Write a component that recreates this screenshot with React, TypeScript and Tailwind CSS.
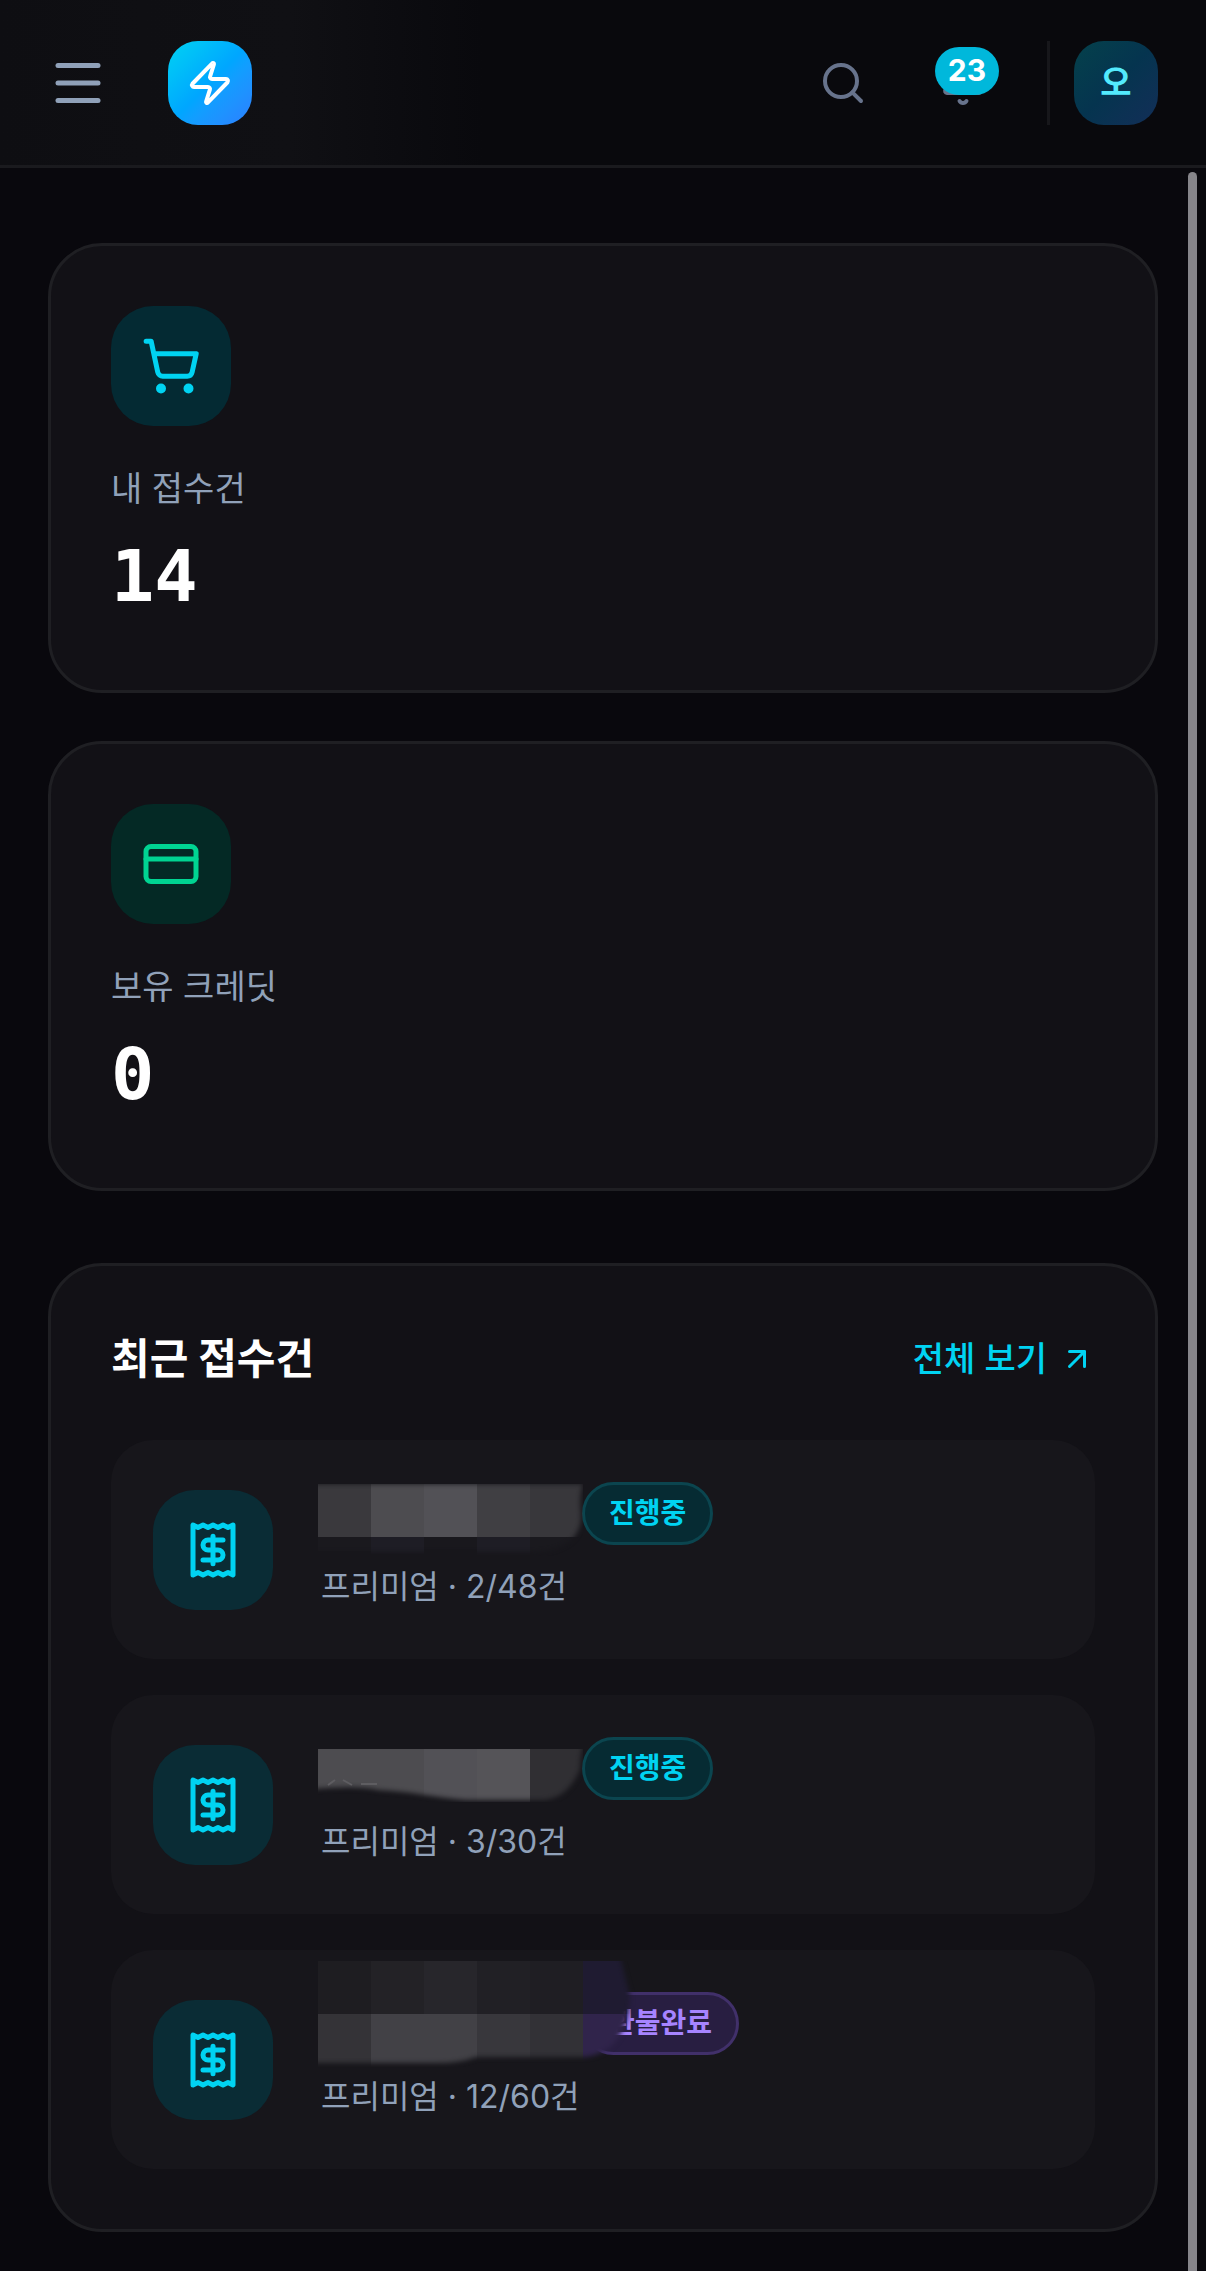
import React from "react";
import {
  ArrowUpRight,
  Bell,
  CreditCard,
  Menu,
  Receipt,
  Search,
  ShoppingCart,
  Zap,
} from "lucide-react";

type Block = { x: number; y: number; w: number; h: number; fill: string };

type Order = {
  id: string;
  detail: string;
  status: string;
  tone: "progress" | "refund";
  outline: string;
  blocks: Block[];
};

const stats = [
  {
    label: "내 접수건",
    value: "14",
    icon: ShoppingCart,
    color: "bg-[#042a33] text-[#00d3f2]",
  },
  {
    label: "보유 크레딧",
    value: "0",
    icon: CreditCard,
    color: "bg-[#042925] text-[#00d492]",
  },
];

const orders: Order[] = [
  {
    id: "order-1",
    detail: "프리미엄 · 2/48건",
    status: "진행중",
    tone: "progress",
    outline: "M-5 33H265Q261 45 263 62Q264 76 256 86Q244 100 214 101H-5Z",
    blocks: [
      { x: 0, y: 86, w: 53, h: 14, fill: "#1a191e" },
      { x: 53, y: 86, w: 53, h: 17, fill: "#1e1d25" },
      { x: 106, y: 86, w: 53, h: 12, fill: "#19181d" },
      { x: 159, y: 86, w: 53, h: 19, fill: "#1e1d25" },
      { x: 212, y: 86, w: 53, h: 19, fill: "#1a191e" },
      { x: 0, y: 33, w: 53, h: 53, fill: "#3a393d" },
      { x: 53, y: 33, w: 53, h: 53, fill: "#4d4c50" },
      { x: 106, y: 33, w: 53, h: 53, fill: "#525156" },
      { x: 159, y: 33, w: 53, h: 53, fill: "#403f43" },
      { x: 212, y: 33, w: 53, h: 53, fill: "#38373b" },
    ],
  },
  {
    id: "order-2",
    detail: "프리미엄 · 3/30건",
    status: "진행중",
    tone: "progress",
    outline: "M-5 38H265Q262 52 262 63Q250 92 226 94H148C120 92 90 85 60 84Q40 79 -5 83Z",
    blocks: [
      { x: 0, y: 43, w: 106, h: 53, fill: "#4d4c50" },
      { x: 106, y: 43, w: 53, h: 53, fill: "#525156" },
      { x: 159, y: 43, w: 53, h: 53, fill: "#555458" },
      { x: 212, y: 43, w: 53, h: 53, fill: "#302f33" },
    ],
  },
  {
    id: "order-3",
    detail: "프리미엄 · 12/60건",
    status: "환불완료",
    tone: "refund",
    outline: "M-5 -5H302Q308 20 312 34Q312 62 298 80Q286 94 268 96H158Q142 102 120 102H-5Z",
    blocks: [
      { x: 0, y: 0, w: 53, h: 53, fill: "#1e1d21" },
      { x: 53, y: 0, w: 53, h: 53, fill: "#232226" },
      { x: 106, y: 0, w: 53, h: 53, fill: "#27262b" },
      { x: 159, y: 0, w: 53, h: 53, fill: "#212025" },
      { x: 212, y: 0, w: 53, h: 53, fill: "#1f1e23" },
      { x: 265, y: 0, w: 53, h: 53, fill: "#1f1b31" },
      { x: 0, y: 53, w: 53, h: 53, fill: "#343337" },
      { x: 53, y: 53, w: 106, h: 53, fill: "#424146" },
      { x: 159, y: 53, w: 53, h: 53, fill: "#38373c" },
      { x: 212, y: 53, w: 53, h: 53, fill: "#323136" },
      { x: 265, y: 53, w: 53, h: 53, fill: "#30244b" },
    ],
  },
];

const tones = {
  progress: "bg-[#062b33] border-[#0b454f] text-[#00d3f2]",
  refund: "bg-[#281e41] border-[#41306a] text-[#a684ff]",
};

// pixelated cover drawn over the customer name
function NameMosaic({ order }: { order: Order }) {
  return (
    <svg
      className="absolute -left-[3px] -top-[31px]"
      width="330"
      height="110"
      viewBox="0 0 330 110"
      aria-hidden="true"
    >
      <defs>
        <filter id={`${order.id}-soft`} x="-5%" y="-5%" width="110%" height="110%">
          <feGaussianBlur stdDeviation="2.5" />
        </filter>
        <mask id={`${order.id}-mask`}>
          <path d={order.outline} fill="#fff" filter={`url(#${order.id}-soft)`} />
        </mask>
      </defs>
      <g mask={`url(#${order.id}-mask)`} shapeRendering="crispEdges">
        {order.blocks.map((b) => (
          <rect key={`${b.x}-${b.y}`} x={b.x} y={b.y} width={b.w} height={b.h} fill={b.fill} />
        ))}
      </g>
      {order.id === "order-2" && (
        <path
          d="M10 79l7-5M25 74l9 5M43 78h16"
          fill="none"
          stroke="#5e5d61"
          strokeWidth="2"
        />
      )}
    </svg>
  );
}

function Header() {
  return (
    <header className="flex h-[168px] items-center justify-between border-b-3 border-[#1a1a1e] bg-linear-to-r from-[#0e0e12] via-[#101014] via-24% to-[#09090d] to-40% px-12">
      <div className="flex items-center gap-[60px]">
        <button type="button" aria-label="메뉴" className="text-[#90a1b9]">
          <Menu size={60} />
        </button>
        <a
          href="#"
          aria-label="홈"
          className="flex size-[84px] items-center justify-center rounded-[30px] bg-linear-to-br from-[#00d3f2] via-[#00a6ff] to-[#2b7fff] text-white"
        >
          <Zap size={48} />
        </a>
      </div>
      <div className="flex items-center">
        <button type="button" aria-label="검색" className="p-[30px] text-[#67738c]">
          <Search size={48} />
        </button>
        <button type="button" aria-label="알림" className="relative ml-3 p-[30px] text-[#67738c]">
          <Bell size={48} />
          <span className="absolute right-[18px] top-[18px] flex h-12 w-16 items-center justify-center rounded-full bg-[#00b8db] text-[30px] font-bold text-white">
            23
          </span>
        </button>
        <div className="ml-[30px] h-[84px] w-[3px] bg-[#17171b]" />
        <button
          type="button"
          className="ml-6 flex size-[84px] items-center justify-center rounded-[30px] bg-linear-to-br from-[#05414b] via-[#05344f] to-[#122e58] text-[34px] font-bold leading-[48px] text-[#53eafd]"
        >
          오
        </button>
      </div>
    </header>
  );
}

export default function App() {
  return (
    <div className="relative min-h-screen bg-[#09080d] font-['Inter','Noto_Sans_CJK_KR',sans-serif]">
      <Header />
      <main className="px-12 pb-[39px] pt-[75px]">
        <section className="grid gap-12">
          {stats.map(({ label, value, icon: Icon, color }) => (
            <div
              key={label}
              className="rounded-[54px] border-3 border-[#1f1f23] bg-[#121116] p-[60px]"
            >
              <div className={`flex size-[120px] items-center justify-center rounded-[42px] ${color}`}>
                <Icon size={60} />
              </div>
              <p className="mt-[39px] text-[34px] leading-[48px] text-[#90a1b9]">{label}</p>
              <p className="mt-[9px] font-['DejaVu_Sans_Mono',monospace] text-[72px] font-bold leading-[108px] text-white">
                {value}
              </p>
            </div>
          ))}
        </section>

        <section className="mt-[72px] rounded-[54px] border-3 border-[#1f1f23] bg-[#121116] p-[60px]">
          <div className="flex h-[66px] items-center justify-between">
            <h2 className="text-[42px] font-bold leading-[66px] text-white">최근 접수건</h2>
            <a
              href="#"
              className="flex items-center gap-3 text-[34px] font-medium leading-[48px] text-[#00d3f2]"
            >
              전체 보기
              <ArrowUpRight size={36} />
            </a>
          </div>
          <ul className="mt-12 grid gap-9">
            {orders.map((order) => (
              <li
                key={order.id}
                className="flex items-center gap-12 rounded-[42px] bg-[#17161b] p-[42px]"
              >
                <div className="flex size-[120px] shrink-0 items-center justify-center rounded-[42px] bg-[#0a2c35] text-[#00d3f2]">
                  <Receipt size={60} />
                </div>
                <div>
                  <div className="relative flex items-center gap-3">
                    <div className="w-[249px]" />
                    <span
                      className={`rounded-full border-3 px-6 text-[28px] font-bold leading-[57px] ${tones[order.tone]}`}
                    >
                      {order.status}
                    </span>
                    <NameMosaic order={order} />
                  </div>
                  <p className="mt-3 text-[32px] leading-[60px] text-[#90a1b9]">{order.detail}</p>
                </div>
              </li>
            ))}
          </ul>
        </section>
      </main>
      {/* scroll thumb */}
      <div className="absolute bottom-0 right-[9px] top-[172px] w-[9px] rounded-t-full bg-[#86858a]" />
    </div>
  );
}
